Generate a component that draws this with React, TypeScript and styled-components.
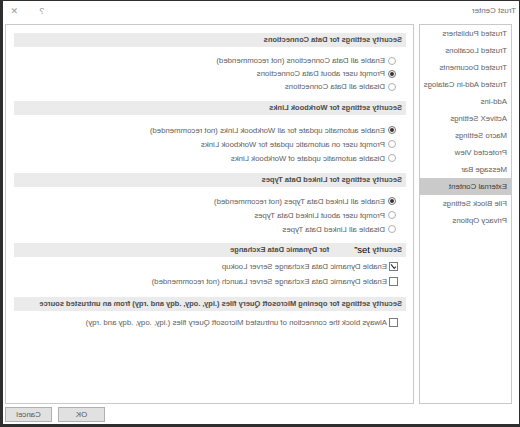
import React from 'react';
import styled, { createGlobalStyle } from 'styled-components';

const GlobalStyle = createGlobalStyle`
  html, body {
    margin: 0;
    padding: 0;
    background: #ffffff;
    overflow: hidden;
  }
`;

// the whole dialog is drawn in mirrored form
const Dialog = styled.div`
  width: 520px;
  height: 427px;
  box-sizing: border-box;
  border: 1px solid #2e2e2e;
  border-right-width: 3px;
  border-bottom-width: 3px;
  background: #ffffff;
  display: flex;
  flex-direction: column;
  transform: scaleX(-1);
  font-family: 'Liberation Sans', Arial, sans-serif;
  font-size: 7.8px;
  color: #606060;
`;

const TitleBar = styled.div`
  height: 23px;
  display: flex;
  align-items: flex-start;
  padding: 5px 5px 0 3px;
  box-sizing: border-box;
  line-height: 10px;
  flex-shrink: 0;
`;

const Title = styled.div`
  flex: 1;
  color: #707070;
  font-size: 8px;
`;

const TitleButton = styled.div<{ $size?: number; $gap?: number }>`
  width: 12px;
  text-align: center;
  color: #999;
  font-size: ${p => p.$size ?? 9}px;
  margin-left: ${p => p.$gap ?? 0}px;
`;

const Body = styled.div`
  height: 380px;
  display: flex;
  gap: 5px;
  padding: 0 2px 0 7px;
  flex-shrink: 0;
`;

const NavPanel = styled.div`
  width: 93px;
  box-sizing: border-box;
  border: 1px solid #c9c9c9;
  display: flex;
  flex-direction: column;
`;

const NavItem = styled.div<{ $active?: boolean }>`
  height: 17px;
  line-height: 17px;
  padding-left: 4px;
  white-space: nowrap;
  color: ${p => (p.$active ? '#3a3a3a' : '#626262')};
  background: ${p => (p.$active ? '#cacaca' : 'transparent')};
`;

const MainPanel = styled.div`
  flex: 1;
  box-sizing: border-box;
  border: 1px solid #c9c9c9;
  padding: 8px 8px 0 7px;
`;

const Section = styled.div<{ $mb?: number }>`
  margin-bottom: ${p => p.$mb ?? 8}px;
`;

const SectionHeader = styled.div<{ $mb?: number }>`
  height: 14px;
  line-height: 14px;
  background: #ebebeb;
  padding-left: 4px;
  font-weight: bold;
  font-size: 7.5px;
  color: #4a4a4a;
  white-space: nowrap;
  overflow: hidden;
  margin-bottom: ${p => p.$mb ?? 7}px;
`;

const Glitch = styled.span`
  display: inline-block;
  width: 38px;
  text-align: right;
  transform: scaleX(-1);
  font-weight: normal;
  color: #000;
  font-size: 9.5px;
  vertical-align: top;
  margin-right: 3px;
`;

const OptionRow = styled.div<{ $h?: number }>`
  height: ${p => p.$h ?? 14}px;
  display: flex;
  align-items: center;
  padding-left: 10px;
  white-space: nowrap;
`;

const Radio = styled.span<{ $on?: boolean }>`
  width: 6px;
  height: 6px;
  border-radius: 50%;
  border: 1px solid ${p => (p.$on ? '#707070' : '#b0b0b0')};
  margin-right: 3px;
  display: flex;
  align-items: center;
  justify-content: center;
  flex-shrink: 0;

  &::after {
    content: '';
    width: 4px;
    height: 4px;
    border-radius: 50%;
    background: ${p => (p.$on ? '#333' : 'transparent')};
  }
`;

const Check = styled.span`
  width: 7px;
  height: 7px;
  border: 1px solid #7a7a7a;
  margin-left: -2px;
  margin-right: 2px;
  flex-shrink: 0;
  display: flex;
  align-items: center;
  justify-content: center;
`;

const Footer = styled.div`
  flex: 1;
  display: flex;
  justify-content: flex-end;
  align-items: flex-start;
  gap: 6px;
  padding: 3px 2px 0 0;
`;

const Button = styled.div`
  width: 47px;
  height: 15px;
  box-sizing: border-box;
  border: 1px solid #b0b0b0;
  background: #e1e1e1;
  color: #555;
  font-size: 7.8px;
  display: flex;
  align-items: center;
  justify-content: center;
`;

const navItems = [
  'Trusted Publishers',
  'Trusted Locations',
  'Trusted Documents',
  'Trusted Add-in Catalogs',
  'Add-ins',
  'ActiveX Settings',
  'Macro Settings',
  'Protected View',
  'Message Bar',
  'External Content',
  'File Block Settings',
  'Privacy Options',
];

interface RadioGroup {
  title: string;
  options: string[];
  selected: number;
  rowHeight?: number;
  headerGap?: number;
  bottomGap?: number;
}

const radioSections: RadioGroup[] = [
  {
    title: 'Security settings for Data Connections',
    options: [
      'Enable all Data Connections (not recommended)',
      'Prompt user about Data Connections',
      'Disable all Data Connections',
    ],
    selected: 1,
    rowHeight: 13,
  },
  {
    title: 'Security settings for Workbook Links',
    options: [
      'Enable automatic update for all Workbook Links (not recommended)',
      'Prompt user on automatic update for Workbook Links',
      'Disable automatic update of Workbook Links',
    ],
    selected: 0,
    headerGap: 8,
  },
  {
    title: 'Security settings for Linked Data Types',
    options: [
      'Enable all Linked Data Types (not recommended)',
      'Prompt user about Linked Data Types',
      'Disable all Linked Data Types',
    ],
    selected: 0,
    bottomGap: 7,
  },
];

const Tick = () => (
  <svg width="7" height="7" viewBox="0 0 7 7">
    <path d="M1 3.6 L2.8 5.4 L6 1.4" fill="none" stroke="#333" strokeWidth="1.1" />
  </svg>
);

const App: React.FC = () => {
  return (
    <>
      <GlobalStyle />
      <Dialog>
        <TitleBar>
          <Title>Trust Center</Title>
          <TitleButton>?</TitleButton>
          <TitleButton $size={9} $gap={16}>✕</TitleButton>
        </TitleBar>

        <Body>
          <NavPanel>
            {navItems.map(item => (
              <NavItem key={item} $active={item === 'External Content'}>
                {item}
              </NavItem>
            ))}
          </NavPanel>

          <MainPanel>
            {radioSections.map(section => (
              <Section key={section.title} $mb={section.bottomGap}>
                <SectionHeader $mb={section.headerGap}>{section.title}</SectionHeader>
                {section.options.map((opt, i) => (
                  <OptionRow key={opt} $h={section.rowHeight}>
                    <Radio $on={i === section.selected} />
                    {opt}
                  </OptionRow>
                ))}
              </Section>
            ))}

            <Section>
              <SectionHeader $mb={2}>
                Security <Glitch>”set</Glitch>
                for Dynamic Data Exchange
              </SectionHeader>
              <OptionRow $h={15}>
                <Check>
                  <Tick />
                </Check>
                Enable Dynamic Data Exchange Server Lookup
              </OptionRow>
              <OptionRow $h={15}>
                <Check />
                Enable Dynamic Data Exchange Server Launch (not recommended)
              </OptionRow>
            </Section>

            <Section>
              <SectionHeader $mb={4}>
                Security settings for opening Microsoft Query files (.iqy, .oqy, .dqy and .rqy) from an untrusted source
              </SectionHeader>
              <OptionRow>
                <Check />
                Always block the connection of untrusted Microsoft Query files (.iqy, .oqy, .dqy and .rqy)
              </OptionRow>
            </Section>
          </MainPanel>
        </Body>

        <Footer>
          <Button>OK</Button>
          <Button>Cancel</Button>
        </Footer>
      </Dialog>
    </>
  );
};

export default App;
